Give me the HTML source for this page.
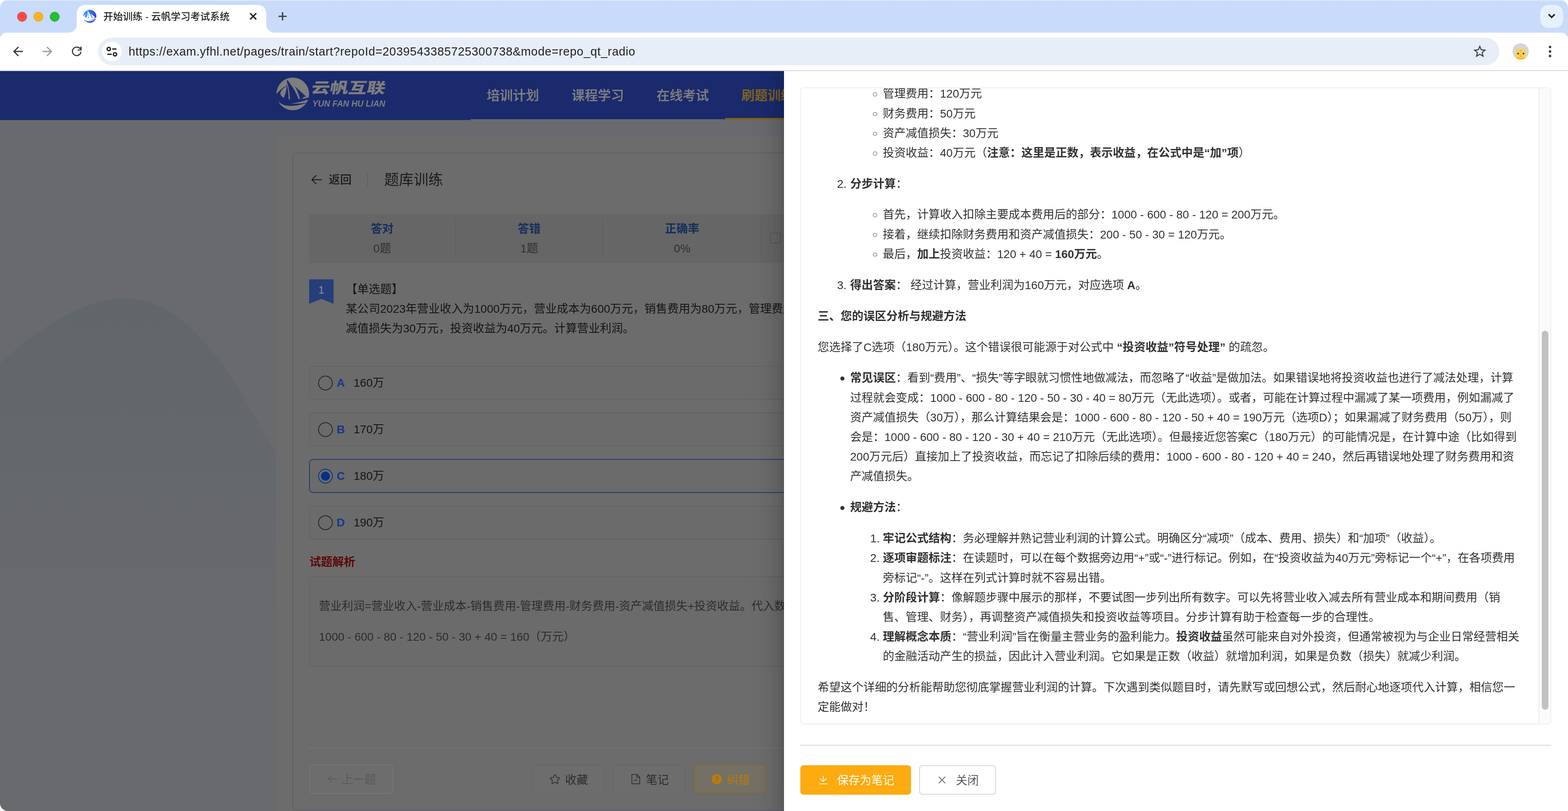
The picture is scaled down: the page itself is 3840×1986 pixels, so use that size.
<!DOCTYPE html>
<html lang="zh-CN">
<head>
<meta charset="utf-8">
<title>开始训练 - 云帆学习考试系统</title>
<style>
*{box-sizing:border-box;margin:0;padding:0}
html,body{width:3840px;height:1986px;overflow:hidden;background:#fff}
body{font-family:"Liberation Sans","Noto Sans CJK SC",sans-serif;color:#303133;-webkit-font-smoothing:antialiased}
#win{will-change:transform;position:absolute;left:0;top:0;width:3840px;height:1986px;border-radius:20px 20px 0 20px;overflow:hidden;background:#c9dbfb}
.abs{position:absolute}
/* ---------- browser chrome ---------- */
#tabstrip{position:absolute;left:0;top:0;width:3840px;height:80px;background:#c9dbfb}
#tabstrip:before{content:"";position:absolute;left:0;top:0;width:100%;height:3px;background:linear-gradient(#e6eefd,#c9dbfb)}
.tl{position:absolute;top:29px;width:24px;height:24px;border-radius:50%}
#tab{position:absolute;left:188px;top:12px;width:464px;height:68px;background:#fff;border-radius:20px 20px 0 0}
#tab:before,#tab:after{content:"";position:absolute;bottom:0;width:20px;height:20px}
#tab:before{left:-20px;background:radial-gradient(circle at 0 0,rgba(255,255,255,0) 19.5px,#fff 20.5px)}
#tab:after{right:-20px;background:radial-gradient(circle at 100% 0,rgba(255,255,255,0) 19.5px,#fff 20.5px)}
#tabtitle{position:absolute;left:65px;top:1px;height:56px;line-height:55px;font-size:24px;font-weight:500;color:#1f1f1f;white-space:nowrap;letter-spacing:0}
#toolbar{position:absolute;left:0;top:80px;width:3840px;height:92px;background:#fff;border-radius:16px 16px 0 0}
#tbline{position:absolute;left:0;top:172px;width:3840px;height:2px;background:#d6d6d6}
#omni{position:absolute;left:240px;top:12px;width:3432px;height:68px;border-radius:34px;background:#e8eef8}
#omni .site{position:absolute;left:10px;top:10px;width:48px;height:48px;border-radius:50%;background:#fff}
#url{position:absolute;left:75px;top:1px;height:68px;line-height:67px;font-size:29px;color:#1f1f1f;white-space:nowrap;letter-spacing:0.66px}
#ddbtn{position:absolute;left:3772px;top:12px;width:56px;height:56px;border-radius:20px;background:#e7f0fe}
/* ---------- page (dimmed) ---------- */
#page{position:absolute;left:0;top:174px;width:3840px;height:1812px;background:#696a6e;overflow:hidden}
#hdr{position:absolute;left:0;top:0;width:3840px;height:120px;background:#1b2a6d}
.nav{position:absolute;top:0;height:120px;line-height:120px;font-size:32px;font-weight:500;color:#7f7f7f;white-space:nowrap;-webkit-text-stroke:0.4px currentColor}
#outer{position:absolute;left:676px;top:159px;width:1400px;height:1700px;background:#6c6c6d;border-radius:16px}
#card{position:absolute;left:716px;top:200px;width:1300px;height:1611px;background:#6c6c6d;border:2px solid #606066;border-radius:10px}
.pt{position:absolute;white-space:nowrap}
.opt{position:absolute;left:757px;width:1300px;height:83px;border:2px solid #646465;border-radius:10px;background:#6b6b6c}
.opt .rd{position:absolute;left:20px;top:21.5px;width:36px;height:36px;border-radius:50%;border:2.2px solid #262626}
.opt .k{position:absolute;left:65.5px;top:0;line-height:79px;font-size:28px;font-weight:700;color:#123a8a}
.opt .v{position:absolute;left:107px;top:0;line-height:79px;font-size:28px;color:#141415;white-space:nowrap}
.btn{position:absolute;top:1698px;height:72px;border:2px solid #66676e;border-radius:8px;background:#6d6d6e;font-size:28px;color:#2b2b2d;white-space:nowrap}
.btn svg{position:absolute}
.btn span{position:absolute;top:2.5px;line-height:68px}
.st1{text-align:center;font-size:28px;line-height:48px;font-weight:700;color:#142e5a;margin-top:2px}
.st2{text-align:center;font-size:28px;line-height:48px;color:#2e2e30;margin-top:2px}
.q{font-size:28px;line-height:48px;color:#141415;margin-top:1.3px}
.an{font-size:28px;line-height:48px;color:#2c2c2e}
/* ---------- drawer ---------- */
#dwrap{position:absolute;left:0;top:174px;width:3840px;height:1812px;overflow:hidden;pointer-events:none}
#drawer{position:absolute;left:1920px;top:0;width:1920px;height:1812px;background:#fff;box-shadow:0 16px 20px -10px rgba(0,0,0,.2),0 32px 48px 4px rgba(0,0,0,.14),0 12px 70px 14px rgba(0,0,0,.13)}
#box{position:absolute;left:40px;top:40px;width:1839px;height:1560px;border:2px solid #eeeeee;border-radius:8px;overflow:hidden;background:#fff}
#sb{position:absolute;right:0;top:0;width:29px;height:100%;background:#fafafa;border-left:2px solid #ececec}
#sb i{position:absolute;left:6px;top:594px;width:16px;height:928px;border-radius:8px;background:#c1c1c1}
#md{position:absolute;left:0;top:-12px;width:1808px;font-size:28px;line-height:48px;color:#303133}
#md .l{position:absolute;white-space:nowrap;height:48px}
#md b{font-weight:700;color:#303133}
#md s{text-decoration:none;text-spacing-trim:space-all}
.dot{position:absolute;width:10px;height:10px;border-radius:50%}
#dline{position:absolute;left:40px;top:1650px;width:1839px;height:2px;background:#d7dae0}
#bsave{position:absolute;left:40px;top:1700px;width:271px;height:72px;border-radius:8px;background:#fcab10;color:#fff;font-size:28px}
#bclose{position:absolute;left:331px;top:1700px;width:188px;height:72px;border-radius:8px;border:2px solid #d3d5dc;background:#fff;color:#55575d;font-size:28px}
#bsave span,#bclose span{position:absolute;top:3px;line-height:70px;white-space:nowrap}
#bclose span{line-height:66px}
</style>
</head>
<body>
<div id="win">
<svg width="0" height="0" style="position:absolute">
  <defs>
    <linearGradient id="lg" gradientUnits="userSpaceOnUse" x1="0" y1="40" x2="100" y2="60"><stop offset="0" stop-color="#2a9bff"/><stop offset="0.55" stop-color="#2f6af5"/><stop offset="1" stop-color="#3140e0"/></linearGradient>
    <clipPath id="lc"><circle cx="50" cy="50" r="50"/></clipPath>
    <symbol id="logo" viewBox="0 0 100 100" overflow="visible">
      <circle cx="50" cy="50" r="50"/>
      <g>
        <!-- cutouts -->
        <g fill="currentColor">
          <path d="M-2 53 Q14 33 31.1 25.4 L33 6.6 C42 18 60 42 67.5 65.7 L72.2 65.7 L77.8 65.5 Q88 63.5 102 60 L102 74 L93.5 75 L91 78.4 C70 85 50 88 30 86 C18 83 10 78 5 72 L-2 72 Z"/>
          <path d="M56.1 26.3 L91 58.2 L86.3 58.7 Q81 60.5 77.8 65.6 L72.2 65.7 Q66 42 56.1 26.3Z"/>
        </g>
        <!-- overlays in foreground colour -->
        </g><g clip-path="url(#lc)">
        <path d="M31.6 26.3 C20 33 10 44 12.3 50 C13.5 56 18.5 60 22.6 62 C27.5 50 30.8 38 31.6 26.3Z"/>
        <path d="M32.2 17 L33.6 16 Q40.3 42 41.5 66.7 L37.3 66.7 Q37 42 32.2 22Z"/>
        <path d="M46 79.2 Q72 76.5 98 67 L102 67 L96 76 Q75 80.5 46 79.6Z"/>
      </g>
    </symbol>
  </defs>
</svg>
<div id="tabstrip">
  <div class="tl" style="left:42px;background:#fe4a44;border:1px solid #e0342f"></div>
  <div class="tl" style="left:82px;background:#feb024;border:1px solid #e09c1a"></div>
  <div class="tl" style="left:122px;background:#22c033;border:1px solid #17a827"></div>
  <div id="tab">
    <svg class="abs" style="left:16px;top:12px" width="32" height="32" viewBox="0 0 100 100"><use href="#logo" fill="url(#lg)" color="#fff"/></svg>
    <div id="tabtitle">开始训练 - 云帆学习考试系统</div>
    <svg class="abs" style="left:421px;top:17px" width="22" height="22" viewBox="0 0 22 22"><path d="M3.5 3.5L18.5 18.5M18.5 3.5L3.5 18.5" stroke="#1f1f1f" stroke-width="3.2" fill="none"/></svg>
  </div>
  <svg class="abs" style="left:680px;top:28px" width="24" height="24" viewBox="0 0 24 24"><path d="M12 2V22M2 12H22" stroke="#3c3c3c" stroke-width="3.2" fill="none"/></svg>
  <div id="ddbtn"><svg class="abs" style="left:16px;top:18px" width="24" height="20" viewBox="0 0 24 20"><path d="M4.5 5L12 12.5L19.5 5" stroke="#1c1c1e" stroke-width="3.6" fill="none"/></svg></div>
</div>
<div id="toolbar">
  <svg class="abs" style="left:26px;top:28px" width="36" height="36" viewBox="0 0 24 24"><path fill="#37383a" d="M20 11H7.83l5.59-5.59L12 4l-8 8 8 8 1.41-1.41L7.83 13H20v-2z"/></svg>
  <svg class="abs" style="left:98px;top:28px" width="36" height="36" viewBox="0 0 24 24"><path fill="#9b9b9b" d="M4 11h12.17l-5.59-5.59L12 4l8 8-8 8-1.41-1.41L16.17 13H4v-2z"/></svg>
  <svg class="abs" style="left:168px;top:26px" width="40" height="40" viewBox="0 0 40 40"><path d="M27.73 13.15A10.35 10.35 0 1 0 30.11 20.7" fill="none" stroke="#37383a" stroke-width="2.8"/><path fill="#37383a" d="M29.3 8H31.8V17.7H22V15.2H29.3Z"/><path fill="#37383a" d="M25.6 11.6L29.3 15.2H31.8V12.6L28.9 9.8Z"/></svg>
  <div id="omni">
    <div class="site"><svg class="abs" style="left:0;top:0" width="48" height="48" viewBox="0 0 48 48" fill="none" stroke="#1f1f1f" stroke-width="3.2"><circle cx="16.4" cy="18" r="4"/><path d="M24.8 18H35.2"/><path d="M12.8 31H23.6"/><circle cx="31.6" cy="31" r="4"/></svg></div>
    <div id="url">https://exam.yfhl.net/pages/train/start?repoId=2039543385725300738&amp;mode=repo_qt_radio</div>
    <svg class="abs" style="left:3365px;top:15px" width="38" height="38" viewBox="0 0 24 24"><path fill="#3a3c40" d="M22 9.24l-7.19-.62L12 2 9.19 8.63 2 9.24l5.46 4.73L5.82 21 12 17.27 18.18 21l-1.63-7.03L22 9.24zM12 15.4l-3.76 2.27 1-4.28-3.32-2.88 4.38-.38L12 6.1l1.71 4.04 4.38.38-3.32 2.88 1 4.28L12 15.4z"/></svg>
  </div>
  <svg class="abs" style="left:3704px;top:26px" width="40" height="40" viewBox="0 0 40 40">
    <defs><clipPath id="avc"><circle cx="20" cy="20" r="20"/></clipPath></defs>
    <circle cx="20" cy="20" r="20" fill="#d6d6d8"/>
    <g clip-path="url(#avc)">
      <path d="M8.5 22 L9.5 11 L15 15.5 Q20 14 25 15.5 L30.5 11 L31.5 22 Q33 30 29 34 L31 41 L9 41 L11 34 Q7 30 8.5 22Z" fill="#fbd148"/>
      <path d="M11 33 Q20 40 29 33 L31 41 L9 41Z" fill="#f7b92c"/>
      <path d="M10.5 13.5 L11.2 18.5 L14 16Z M29.5 13.5 L28.8 18.5 L26 16Z" fill="#f9e08a"/>
      <path d="M18 16 L20 21 L22 16Z" fill="#f0a33a"/>
      <circle cx="13.8" cy="25.2" r="1.9" fill="#2a2118"/><circle cx="27.2" cy="25.2" r="1.9" fill="#2a2118"/>
      <path d="M18.8 28 L21.2 28 L20 29.8Z" fill="#f08a6a"/>
      <path d="M18.5 31.3 Q20 32.4 21.5 31.3" stroke="#8a5a20" stroke-width="0.9" fill="none"/>
    </g>
  </svg>
  <svg class="abs" style="left:3786px;top:26px" width="20" height="40" viewBox="0 0 20 40" fill="#3a3c40"><circle cx="10" cy="9" r="3.1"/><circle cx="10" cy="20.1" r="3.1"/><circle cx="10" cy="31.2" r="3.1"/></svg>
</div>
<div id="tbline"></div>
<!--CHROME-END-->
<div id="page">
  <svg class="abs" style="left:0;top:0" width="800" height="1812" viewBox="0 0 800 1812"><defs><linearGradient id="hg" x1="0" y1="557" x2="0" y2="1500" gradientUnits="userSpaceOnUse"><stop offset="0" stop-color="#61666a"/><stop offset="1" stop-color="#696a6e"/></linearGradient></defs><path d="M0 715C110 615 215 557 308 557C440 557 545 690 676 939L800 1200V1812H0Z" fill="url(#hg)"/></svg>
  <div id="hdr">
    <svg class="abs" style="left:677px;top:16px" width="80" height="80" viewBox="0 0 100 100"><use href="#logo" fill="#7e7e7e" color="#1b2a6d"/></svg>
    <div class="abs" id="lgcn" style="left:763px;top:14px;font-size:36px;line-height:56px;font-weight:900;color:#7e7e7e;white-space:nowrap;transform-origin:0 50%;transform:skewX(-10deg) scale(1.257,1.0)">云帆互联</div>
    <div class="abs" id="lgen" style="left:765px;top:64px;font-size:22px;line-height:32px;font-weight:700;font-style:italic;color:#7e7e7e;white-space:nowrap;transform-origin:0 50%;transform:scaleX(0.93)">YUN FAN HU LIAN</div>
    <div class="abs" style="left:1152px;top:118px;width:800px;height:2px;background:#6d6e73"></div>
    <div class="nav" style="left:1192px">培训计划</div>
    <div class="nav" style="left:1400px">课程学习</div>
    <div class="nav" style="left:1608px">在线考试</div>
    <div class="nav" style="left:1816px;color:#84671a">刷题训练</div>
    <div class="abs" style="left:1776px;top:115px;width:208px;height:5px;background:#80641b"></div>
  </div>
  <div id="outer"></div>
  <div id="card"></div>
  <!-- page header -->
  <svg class="abs" style="left:757px;top:247.7px" width="36" height="36" viewBox="0 0 1024 1024" fill="#1b1b1c"><path d="M224 480h640a32 32 0 1 1 0 64H224a32 32 0 0 1 0-64z"/><path d="m237.248 512 265.408 265.344a32 32 0 0 1-45.312 45.312l-288-288a32 32 0 0 1 0-45.312l288-288a32 32 0 1 1 45.312 45.312L237.248 512z"/></svg>
  <div class="pt" style="left:805px;top:242.5px;font-size:28px;line-height:48px;font-weight:500;color:#1b1b1c">返回</div>
  <div class="abs" style="left:899px;top:250px;width:2px;height:32px;background:#5f5f63"></div>
  <div class="pt" style="left:941px;top:240px;font-size:36px;line-height:54px;color:#1b1b1c">题库训练</div>
  <!-- stats -->
  <div class="abs" style="left:757px;top:350px;width:1300px;height:120px;background:#666667"></div>
  <div class="abs" style="left:1115px;top:362px;width:2px;height:96px;background:#5f5f61"></div>
  <div class="abs" style="left:1475px;top:362px;width:2px;height:96px;background:#5f5f61"></div>
  <div class="abs" style="left:1863px;top:362px;width:2px;height:96px;background:#5f5f61"></div>
  <div class="pt st1" style="left:757px;width:358px;top:361px">答对</div><div class="pt st2" style="left:757px;width:358px;top:409px">0题</div>
  <div class="pt st1" style="left:1116px;width:360px;top:361px">答错</div><div class="pt st2" style="left:1116px;width:360px;top:409px">1题</div>
  <div class="pt st1" style="left:1477px;width:387px;top:361px">正确率</div><div class="pt st2" style="left:1477px;width:387px;top:409px">0%</div>
  <div class="abs" style="left:1886px;top:396px;width:26px;height:26px;border:2px solid #58585d;border-radius:4px;background:#676768"></div>
  <!-- question -->
  <svg class="abs" style="left:757px;top:510px" width="60" height="60" viewBox="0 0 60 60"><path d="M0 0H60V60L30 48L0 60Z" fill="#263e79"/></svg>
  <div class="pt" style="left:757px;width:60px;top:511.5px;text-align:center;font-size:26px;line-height:48px;color:#8d93a6">1</div>
  <div class="pt q" style="left:847px;top:510px">【单选题】</div>
  <div class="pt q" style="left:847px;top:558px">某公司2023年营业收入为1000万元，营业成本为600万元，销售费用为80万元，管理费用为120万元，财务费用为50万元，资产</div>
  <div class="pt q" style="left:847px;top:606px">减值损失为30万元，投资收益为40万元。计算营业利润。</div>
  <!-- options -->
  <div class="opt" style="top:722px"><div class="rd"></div><div class="k">A</div><div class="v">160万</div></div>
  <div class="opt" style="top:836px"><div class="rd"></div><div class="k">B</div><div class="v">170万</div></div>
  <div class="opt" style="top:950px;border-color:#243a6e"><div class="rd" style="border-color:#0a3488"></div><div class="abs" style="left:27px;top:28.5px;width:22px;height:22px;border-radius:50%;background:#04308a"></div><div class="k">C</div><div class="v">180万</div></div>
  <div class="opt" style="top:1064px"><div class="rd"></div><div class="k">D</div><div class="v">190万</div></div>
  <!-- analysis -->
  <div class="pt" style="left:758px;top:1178.5px;font-size:28px;line-height:48px;font-weight:700;color:#5e0606">试题解析</div>
  <div class="abs" style="left:757px;top:1237px;width:1300px;height:222px;border:2px solid #646465;border-radius:10px;background:#6b6b6c"></div>
  <div class="pt an" style="left:781px;top:1287px">营业利润=营业收入-营业成本-销售费用-管理费用-财务费用-资产减值损失+投资收益。代入数据：</div>
  <div class="pt an" style="left:781px;top:1362px">1000 - 600 - 80 - 120 - 50 - 30 + 40 = 160（万元）</div>
  <!-- footer -->
  <div class="abs" style="left:757px;top:1656px;width:1300px;height:2px;background:#75767b"></div>
  <div class="btn" style="left:757px;width:206px;color:#57585c;border-color:#75767d"><svg style="left:39.5px;top:19.3px" width="28" height="28" viewBox="0 0 1024 1024" fill="#5a5b5f"><path d="M224 480h640a32 32 0 1 1 0 64H224a32 32 0 0 1 0-64z"/><path d="m237.248 512 265.408 265.344a32 32 0 0 1-45.312 45.312l-288-288a32 32 0 0 1 0-45.312l288-288a32 32 0 1 1 45.312 45.312L237.248 512z"/></svg><span style="left:78px;top:1.5px">上一题</span></div>
  <div class="btn" style="left:1303px;width:178px"><svg style="left:40px;top:20px" width="28" height="28" viewBox="0 0 1024 1024" fill="#2b2b2d"><path d="m512 747.840 228.160 119.936a6.400 6.400 0 0 0 9.280-6.720l-43.520-254.080 184.512-179.904a6.400 6.400 0 0 0-3.520-10.880l-255.104-37.120L517.760 147.904a6.400 6.400 0 0 0-11.520 0L392.192 379.072l-255.104 37.120a6.400 6.400 0 0 0-3.520 10.880L318.080 606.976l-43.584 254.080a6.400 6.400 0 0 0 9.280 6.720L512 747.840zM313.600 924.480a70.400 70.400 0 0 1-102.144-74.240l37.888-220.928L88.960 472.960A70.400 70.400 0 0 1 128 352.896l221.760-32.256 99.200-200.960a70.400 70.400 0 0 1 126.208 0l99.200 200.960 221.824 32.256a70.400 70.400 0 0 1 39.040 120.064L774.720 629.376l37.888 220.928a70.400 70.400 0 0 1-102.144 74.240L512 820.096l-198.400 104.320z"/></svg><span style="left:79px">收藏</span></div>
  <div class="btn" style="left:1501px;width:178px"><svg style="left:40px;top:20px" width="28" height="28" viewBox="0 0 1024 1024" fill="#2b2b2d"><path d="M805.504 320 640 154.496V320h165.504zM832 384H576V128H192v768h640V384zM160 64h480l256 256v608a32 32 0 0 1-32 32H160a32 32 0 0 1-32-32V96a32 32 0 0 1 32-32zm192 512h320v64H352v-64z"/></svg><span style="left:79px">笔记</span></div>
  <div class="btn" style="left:1699px;width:178px;border-color:#80692f;background:#747063;color:#b97b0b"><svg style="left:40px;top:20px" width="28" height="28" viewBox="0 0 1024 1024" fill="#b97b0b"><path d="M512 64a448 448 0 1 1 0 896 448 448 0 0 1 0-896zm23.744 191.488c-52.096 0-92.928 14.784-123.200 44.352-30.976 29.568-45.760 70.400-45.760 122.496h80.256c0-29.568 5.632-52.800 17.600-68.992 13.376-19.712 35.200-28.864 66.176-28.864 23.936 0 42.944 6.336 56.320 19.712 12.672 13.376 19.712 31.680 19.712 54.912 0 17.600-6.336 34.496-19.008 49.984l-8.448 9.856c-45.760 40.832-73.216 70.400-82.368 89.408-9.856 19.008-14.080 42.240-14.080 68.992v9.856h80.960v-9.856c0-16.896 3.520-31.680 10.560-45.760 6.336-12.672 15.488-24.640 28.160-35.200 33.792-29.568 54.208-48.576 60.544-55.616 16.896-22.528 26.048-51.392 26.048-86.592 0-42.944-14.080-76.736-42.240-101.376-28.160-25.344-65.472-37.312-111.232-37.312zm-12.672 406.208a54.272 54.272 0 0 0-38.720 14.784 49.408 49.408 0 0 0-15.488 38.016c0 15.488 4.928 28.160 15.488 38.016A54.848 54.848 0 0 0 523.072 768c15.488 0 28.160-4.928 38.720-14.784a51.520 51.520 0 0 0 16.192-38.720 51.968 51.968 0 0 0-15.488-38.016 55.936 55.936 0 0 0-39.424-14.784z"/></svg><span style="left:79px">纠错</span></div>
</div>
<!--PAGE-END-->
<!--DRAWER-BEGIN--><div id="dwrap"><div id="drawer">
  <div id="box">
    <div id="md">
<i class="dot" style="left:176.3px;top:22.3px;width:9.6px;height:9.6px;border:1.9px solid #303133"></i>
<div class="l" style="left:200px;top:2.4px">管理费用：120万元</div>
<i class="dot" style="left:176.3px;top:70.5px;width:9.6px;height:9.6px;border:1.9px solid #303133"></i>
<div class="l" style="left:200px;top:50.7px">财务费用：50万元</div>
<i class="dot" style="left:176.3px;top:118.8px;width:9.6px;height:9.6px;border:1.9px solid #303133"></i>
<div class="l" style="left:200px;top:98.9px">资产减值损失：30万元</div>
<i class="dot" style="left:176.3px;top:167.0px;width:9.6px;height:9.6px;border:1.9px solid #303133"></i>
<div class="l" style="left:200px;top:147.1px">投资收益：40万元（<b>注意：这里是正数，表示收益，在公式中是“加”项</b>）</div>
<div class="l" style="left:88px;top:223.1px">2.</div>
<div class="l" style="left:120px;top:223.1px"><b>分步计算</b>：</div>
<i class="dot" style="left:176.3px;top:318.3px;width:9.6px;height:9.6px;border:1.9px solid #303133"></i>
<div class="l" style="left:200px;top:298.4px">首先，计算收入扣除主要成本费用后的部分：1000 - 600 - 80 - 120 = 200万元。</div>
<i class="dot" style="left:176.3px;top:366.5px;width:9.6px;height:9.6px;border:1.9px solid #303133"></i>
<div class="l" style="left:200px;top:346.6px">接着，继续扣除财务费用和资产减值损失：200 - 50 - 30 = 120万元。</div>
<i class="dot" style="left:176.3px;top:414.8px;width:9.6px;height:9.6px;border:1.9px solid #303133"></i>
<div class="l" style="left:200px;top:394.8px">最后，<b>加上</b>投资收益：120 + 40 = <b>160万元</b>。</div>
<div class="l" style="left:88px;top:470.9px">3.</div>
<div class="l" style="left:120px;top:470.9px"><b>得出答案</b>： 经过计算，营业利润为160万元，对应选项 <b>A</b>。</div>
<div class="l" style="left:40.5px;top:547.1px"><b>三、您的误区分析与规避方法</b></div>
<div class="l" style="left:40.5px;top:622.7px">您选择了C选项（180万元）。这个错误很可能源于对公式中 <b>“投资收益”符号处理”</b> 的疏忽。</div>
<i class="dot" style="left:96.0px;top:718.0px;background:#303133"></i>
<div class="l" style="left:120px;top:698.3px"><b>常见误区</b>：看到“费用”、“损失”等字眼就习惯性地做减法，而忽略了“收益”是做加法。如果错误地将投资收益也进行了减法处理，计算</div>
<div class="l" style="left:120px;top:746.5px">过程就会变成：1000 - 600 - 80 - 120 - 50 - 30 - 40 = 80万元（无此选项）。或者，可能在计算过程中漏减了某一项费用，例如漏减了</div>
<div class="l" style="left:120px;top:794.7px">资产减值损失（30万），那么计算结果会是：1000 - 600 - 80 - 120 - 50 + 40 = 190万元（选项D）；如果漏减了财务费用（50万），则</div>
<div class="l" style="left:120px;top:842.9px">会是：1000 - 600 - 80 - 120 - 30 + 40 = 210万元（无此选项）。但最接近您答案C（180万元）的可能情况是，在计算中途（比如得到</div>
<div class="l" style="left:120px;top:891.1px">200万元后）直接加上了投资收益，而忘记了扣除后续的费用：1000 - 600 - 80 - 120 + 40 = 240，然后再错误地处理了财务费用和资</div>
<div class="l" style="left:120px;top:939.3px">产减值损失。</div>
<i class="dot" style="left:96.0px;top:1034.8px;background:#303133"></i>
<div class="l" style="left:120px;top:1015.1px"><b>规避方法</b>：</div>
<div class="l" style="left:169px;top:1091.2px">1.</div>
<div class="l" style="left:200px;top:1091.2px"><b>牢记公式结构</b>：务必理解并熟记营业利润的计算公式。明确区分“减项”<s>（</s>成本、费用、损失）和“加项”<s>（</s>收益）。</div>
<div class="l" style="left:169px;top:1139.4px">2.</div>
<div class="l" style="left:200px;top:1139.4px"><b>逐项审题标注</b>：在读题时，可以在每个数据旁边用“+”或“-”进行标记。例如，在“投资收益为40万元”旁标记一个“+”，在各项费用</div>
<div class="l" style="left:200px;top:1187.6px">旁标记“-”。这样在列式计算时就不容易出错。</div>
<div class="l" style="left:169px;top:1235.8px">3.</div>
<div class="l" style="left:200px;top:1235.8px"><b>分阶段计算</b>：像解题步骤中展示的那样，不要试图一步列出所有数字。可以先将营业收入减去所有营业成本和期间费用（销</div>
<div class="l" style="left:200px;top:1284.0px">售、管理、财务），再调整资产减值损失和投资收益等项目。分步计算有助于检查每一步的合理性。</div>
<div class="l" style="left:169px;top:1332.2px">4.</div>
<div class="l" style="left:200px;top:1332.2px"><b>理解概念本质</b>：“营业利润”旨在衡量主营业务的盈利能力。<b>投资收益</b>虽然可能来自对外投资，但通常被视为与企业日常经营相关</div>
<div class="l" style="left:200px;top:1380.4px">的金融活动产生的损益，因此计入营业利润。它如果是正数（收益）就增加利润，如果是负数（损失）就减少利润。</div>
<div class="l" style="left:40.5px;top:1455.7px">希望这个详细的分析能帮助您彻底掌握营业利润的计算。下次遇到类似题目时，请先默写或回想公式，然后耐心地逐项代入计算，相信您一</div>
<div class="l" style="left:40.5px;top:1503.9px">定能做对！</div>
    </div>
    <div id="sb"><i></i></div>
  </div>
  <div id="dline"></div>
  <div id="bsave"><svg class="abs" style="left:42px;top:22px" width="28" height="28" viewBox="0 0 1024 1024" fill="#fff"><path d="M160 832h704a32 32 0 1 1 0 64H160a32 32 0 1 1 0-64zm384-253.696 236.288-236.352 45.248 45.248L508.800 704 192 387.200l45.248-45.248L480 584.704V128h64v450.304z"/></svg><span style="left:90px">保存为笔记</span></div>
  <div id="bclose"><svg class="abs" style="left:40px;top:20px" width="28" height="28" viewBox="0 0 1024 1024" fill="#55575d"><path d="M764.288 214.592 512 466.880 259.712 214.592a31.936 31.936 0 0 0-45.120 45.120L466.752 512 214.528 764.224a31.936 31.936 0 1 0 45.120 45.184L512 557.184l252.288 252.288a31.936 31.936 0 0 0 45.120-45.120L557.120 512.064l252.288-252.352a31.936 31.936 0 1 0-45.120-45.184z"/></svg><span style="left:88px">关闭</span></div>
</div></div>
<!--DRAWER-END-->
</div>
</body>
</html>
